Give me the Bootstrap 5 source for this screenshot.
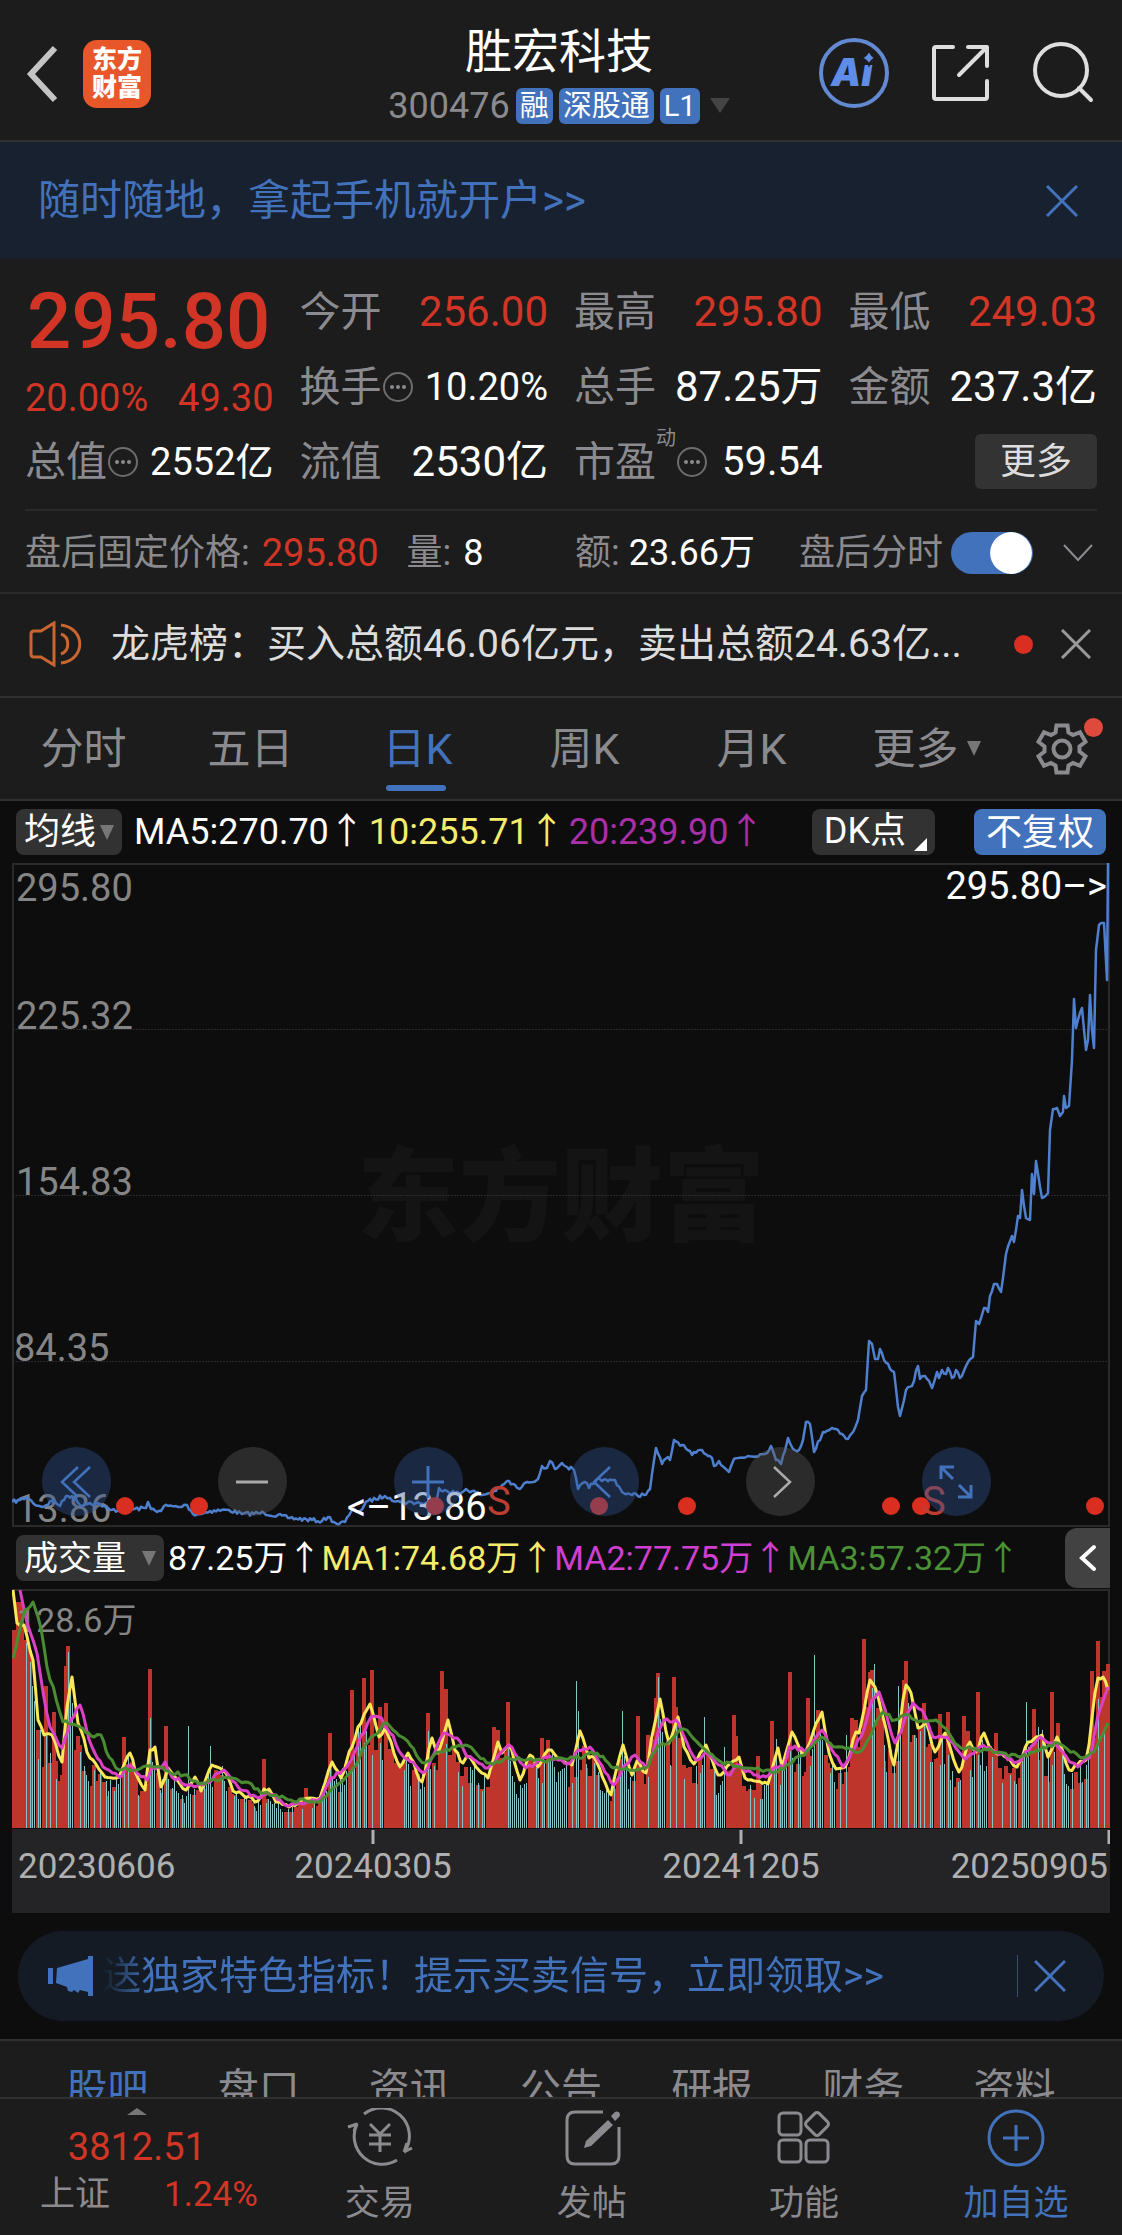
<!DOCTYPE html>
<html lang="zh-CN" data-bs-theme="dark">
<head>
<meta charset="utf-8">
<meta name="viewport" content="width=device-width, initial-scale=1">
<title>胜宏科技 300476</title>
<link rel="stylesheet" href="https://cdn.jsdelivr.net/npm/bootstrap@5.3.0/dist/css/bootstrap.min.css">
<style>
:root{--panel:#1c1c1c;--ink:#0d0d0d;--blue:#4272bb;--up:#d23525;--dim:#8b8b8f;--line:#303030}
body{background:var(--ink);color:#fff;font-family:Roboto,"Noto Sans CJK SC",sans-serif;font-size:36px;line-height:48px}
button{background:none;border:0;padding:0;color:inherit;line-height:inherit}
svg{display:block}
svg text{font-family:Roboto,"Noto Sans CJK SC",sans-serif}
.panel{background:var(--panel)}
.rule-b{border-bottom:2px solid var(--line)}
.dim{color:var(--dim)}.up{color:var(--up)}.blue{color:var(--blue)}
.topbar{height:142px}
.side{flex:1 1 0}
.actions{gap:40px;padding:6px 28px 0 0}
.heading{padding-top:11px}
.codes{gap:6px}
.logo{width:68px;height:68px;border-radius:14px;background:#e8572a;font-size:25px;line-height:28px;font-weight:900;color:#fff}
.stock{font-size:47px;line-height:60px}
.chip{background:var(--blue);border-radius:6px;font-size:29px;line-height:36px;padding:0 4px}
.tri{width:0;height:0;border:10px solid transparent;border-bottom:0;border-top:15px solid #444}
.tri-sm{border-width:15px 7px 0;border-top-color:#777}
.ad{background:#182130;color:var(--blue);font-size:42px;height:117px;padding:0 44px 0 38px}
.quotes{display:grid;grid-template-columns:repeat(4,1fr);grid-auto-rows:75px;column-gap:26px;padding:15px 25px 10px}
.quotes>.cell{display:flex;align-items:center;justify-content:space-between;white-space:nowrap}
.cell>.key{font-size:41px;color:var(--dim);display:flex;align-items:center}
.key>sup{font-size:20px;top:0}
.f42{font-size:42px}.f40{font-size:40px}.f38{font-size:38px}.f34{font-size:34px}
.price{grid-row:span 2;padding-top:12px}
.price>.big{font-size:78px;line-height:72px;font-weight:500;padding-left:2px}
.more{background:#333;border-radius:6px;font-size:36px;color:#ddd;width:122px;height:55px}
.after{display:grid;grid-template-columns:550fr 224fr 298fr;margin:0 25px;padding:18px 0 15px;border-top:2px solid #2a2a2a;white-space:nowrap}
.after .form-check-input{width:82px;height:42px;margin:0;border:0;background-color:var(--blue);background-position:right 0 center;background-size:44px 44px;background-image:url("data:image/svg+xml,%3csvg xmlns='http://www.w3.org/2000/svg' viewBox='-4 -4 8 8'%3e%3ccircle r='3.8' fill='%23fff'/%3e%3c/svg%3e")}
.news{height:104px;padding:0 31px 2px 29px;font-size:39px;color:#ddd;border-top:2px solid #2a2a2a}
.dot{width:19px;height:19px;border-radius:50%;background:#d92e20}
.period{height:105px;color:var(--dim);font-size:43px;border-top:2px solid var(--line)}
.period>.tab{flex:0 0 167px;height:100%;position:relative;text-align:center;text-decoration:none;color:inherit;display:flex;align-items:center;justify-content:center;gap:8px}
.period>.tab.on{color:var(--blue)}
.period>.tab.on::after{content:"";position:absolute;left:50%;bottom:8px;width:60px;height:6px;margin-left:-32px;border-radius:3px;background:var(--blue)}
.geardot{position:absolute;right:19px;top:20px;background:#e04a3c}
.bar{height:62px;padding:0 16px;white-space:nowrap}
.pick{background:#323232;border-radius:8px;height:46px}
.adjust{background:var(--blue);padding:0 12px;margin:0 0 0 39px}
.plot{margin:0 12px;position:relative}
.plot>svg,.axis>svg{width:100%;height:auto}
.tools{position:absolute;left:2%;right:1%;bottom:11px;display:flex;gap:107px;padding-left:8px}
.tools>button{width:69px;height:69px;border-radius:50%;background:rgba(90,90,90,.4);color:#aaa;display:grid;place-items:center}
.tools>.bl{background:rgba(48,84,144,.4);color:var(--blue)}
.axis{margin:0 12px;background:#242426}
.fold{background:#424242;border-radius:12px 0 0 12px;width:45px;height:60px;margin-right:-4px}
.promo{margin:18px;height:90px;border-radius:45px;background:#141b24;color:var(--blue);font-size:39px;padding:0 38px 0 30px}
.promo .txt{mask-image:linear-gradient(90deg,transparent,#000 46px);-webkit-mask-image:linear-gradient(90deg,transparent,#000 46px);white-space:nowrap;overflow:hidden}
.promo .vr{opacity:.6}
.subtabs{border-top:2px solid var(--line);padding:24px 32px 20px;font-size:41px}
.subtabs a{flex:1;text-align:center;text-decoration:none;color:var(--dim)}
.subtabs a.on{color:var(--blue)}
.dock{background:var(--panel);border-top:2px solid var(--line);height:138px;font-size:35px}
.dock>a{flex:1 1 0;text-decoration:none;color:var(--dim);display:flex;flex-direction:column;align-items:center;padding-top:9px}
.dock>a.on{color:var(--blue)}
.dock>a span{line-height:48px;margin-top:12px}
.dock>.index{flex:0 0 24.4%;padding-top:9px}
.index>.caret{width:0;height:0;border:10px solid transparent;border-top:0;border-bottom:7px solid #777}
.index>.pair{gap:54px;padding-left:40px}
</style>
<script src="https://cdn.jsdelivr.net/npm/bootstrap@5.3.0/dist/js/bootstrap.bundle.min.js"></script>
</head>
<body>
<header class="topbar panel rule-b d-flex align-items-center">
  <div class="side d-flex align-items-center ps-4 pt-2">
    <button aria-label="返回"><svg width="59" height="60" viewBox="0 0 59 60" fill="none" stroke="#c4c4c4" stroke-width="6"><path d="M31 4 7 30l24 26"/></svg></button>
    <div class="logo d-flex flex-column align-items-center justify-content-center"><span>东方</span><span>财富</span></div>
  </div>
  <div class="heading text-center">
    <h1 class="stock fw-normal m-0">胜宏科技</h1>
    <div class="codes d-flex align-items-center justify-content-center">
      <span class="dim">300476</span><span class="chip">融</span><span class="chip">深股通</span><span class="chip">L1</span><span class="tri ms-1"></span>
    </div>
  </div>
  <div class="side actions d-flex align-items-center justify-content-end">
    <button aria-label="Ai"><svg width="72" height="72" viewBox="0 0 72 72"><circle cx="36" cy="36" r="33" fill="none" stroke="#6389d2" stroke-width="4"/><text x="13" y="49" font-size="38" font-style="italic" style="font-family:Inter,sans-serif;font-weight:900" fill="#5f8ce6">Ai</text><path fill="#5f8ce6" stroke="#1c1c1c" stroke-width="2" d="M51 13q2 6 7 8-5 2-7 7-2-5-8-7 6-2 8-8z"/></svg></button>
    <button aria-label="分享"><svg width="60" height="60" viewBox="0 0 60 60" fill="none" stroke="#dedede" stroke-width="4" stroke-linecap="round" stroke-linejoin="round"><path d="M23 4H6a2 2 0 0 0-2 2v48a2 2 0 0 0 2 2h49a2 2 0 0 0 2-2V38M38 4h19v19M57 4 29 32"/></svg></button>
    <button aria-label="搜索"><svg width="64" height="64" viewBox="0 0 64 64" fill="none" stroke="#dedede" stroke-width="4" stroke-linecap="round"><circle cx="31" cy="29" r="26"/><path d="m49 47 12 12"/></svg></button>
  </div>
</header>

<div class="ad d-flex align-items-center justify-content-between">
  <span>随时随地，拿起手机就开户&gt;&gt;</span>
  <button aria-label="关闭"><svg width="32" height="32" viewBox="0 0 32 32" stroke="currentColor" stroke-width="3"><path d="m1 1 30 30M31 1 1 31"/></svg></button>
</div>

<main>
<section class="panel">
  <div class="quotes">
    <div class="price up"><div class="big">295.80</div><div class="d-flex justify-content-between f38 pt-3"><span>20.00%</span><span>49.30</span></div></div>
    <div class="cell"><span class="key">今开</span><span class="f42 up">256.00</span></div>
    <div class="cell"><span class="key">最高</span><span class="f42 up">295.80</span></div>
    <div class="cell"><span class="key">最低</span><span class="f42 up">249.03</span></div>
    <div class="cell"><span class="key">换手<svg width="32" height="32" viewBox="0 0 32 32"><use href="#more-i"/></svg></span><span class="f38">10.20%</span></div>
    <div class="cell"><span class="key">总手</span><span class="f42">87.25万</span></div>
    <div class="cell"><span class="key">金额</span><span class="f42">237.3亿</span></div>
    <div class="cell"><span class="key">总值<svg width="32" height="32" viewBox="0 0 32 32"><use href="#more-i"/></svg></span><span class="f38">2552亿</span></div>
    <div class="cell"><span class="key">流值</span><span class="f42">2530亿</span></div>
    <div class="cell"><span class="key">市盈<sup class="align-self-start">动</sup><svg width="32" height="32" viewBox="0 0 32 32"><use href="#more-i"/></svg></span><span class="f40">59.54</span></div>
    <div class="cell justify-content-end"><button class="more">更多</button></div>
  </div>
  <div class="after dim">
    <div class="d-flex"><span>盘后固定价格:</span><span class="up f38 ms-2 ps-1 me-4">295.80</span><span class="ps-1">量:</span><span class="text-white ms-2 ps-1">8</span></div>
    <div>额: <span class="text-white">23.66万</span></div>
    <div class="d-flex align-items-center form-switch p-0"><label for="ah" class="me-2">盘后分时</label><input class="form-check-input" type="checkbox" role="switch" id="ah" checked><button class="ms-auto me-1" aria-label="展开"><svg width="30" height="20" viewBox="0 0 30 20" fill="none" stroke="#8b8b8f" stroke-width="2"><path d="m1 2 14 15L29 2"/></svg></button></div>
  </div>
</section>

<section class="news panel d-flex align-items-center">
  <svg width="54" height="46" viewBox="0 0 54 46" fill="none" stroke="#c9662f" stroke-width="3"><path d="M2 13q0-3 3-3h7L25 2v42L12 36H5q-3 0-3-3zM32 13c9 3 9 17 0 20M32 4c25 3 25 35 0 38"/></svg>
  <span class="flex-fill ps-4 ms-1 text-nowrap">龙虎榜：买入总额46.06亿元，卖出总额24.63亿...</span>
  <i class="dot me-4"></i>
  <button class="ms-1" aria-label="关闭"><svg width="30" height="30" viewBox="0 0 30 30" stroke="#9a9a9a" stroke-width="3"><path d="m1 1 28 28M29 1 1 29"/></svg></button>
</section>

<nav class="period panel d-flex align-items-center rule-b position-relative">
  <a class="tab" href="#">分时</a><a class="tab" href="#">五日</a><a class="tab on" href="#">日K</a><a class="tab" href="#">周K</a><a class="tab" href="#">月K</a><a class="tab ps-3" href="#">更多<span class="tri tri-sm"></span></a>
  <button class="flex-fill d-flex justify-content-center" aria-label="设置"><svg width="54" height="54" viewBox="-27 -27 54 54" fill="none" stroke="#8b8b8f" stroke-width="4"><path d="M-5.500-23.500h11L6.500-16.500 11-13.900 18-16.800 23.500-7.200 17.500-2.600V2.600L23.500 7.200 18 16.800 11 13.900 6.500 16.500 5.500 23.500h-11L-6.500 16.500-11 13.900-18 16.800-23.500 7.200-17.500 2.600V-2.600L-23.500-7.200-18-16.800-11-13.900-6.500-16.500z"/><circle r="8.500"/></svg></button>
  <i class="dot geardot"></i>
</nav>

<section>
  <div class="bar d-flex align-items-center">
    <button class="pick d-flex align-items-center px-2 me-2"><span>均线</span><span class="tri tri-sm ms-1"></span></button>
    <span class="ms-1 me-1">MA5:270.70↑</span><span class="me-1" style="color:#f6ec6c">10:255.71↑</span><span style="color:#a92fa9">20:239.90↑</span>
    <button class="pick d-flex align-items-end ms-auto ps-2 pe-2"><span class="ps-1">DK点</span><svg class="ms-2 mb-1" width="13" height="13"><path fill="#fff" d="M13 0v13H0z"/></svg></button>
    <button class="pick adjust">不复权</button>
  </div>
  <div class="plot">
    <svg id="price" viewBox="12 863 1098 664">
      <defs><g id="more-i"><circle cx="16" cy="16" r="14" fill="none" stroke="#6d6d70" stroke-width="2"/><g fill="#8b8b8f"><circle cx="10" cy="16" r="2"/><circle cx="16" cy="16" r="2"/><circle cx="22" cy="16" r="2"/></g></g></defs>
      <text x="561" y="1233" text-anchor="middle" font-size="102" style="font-weight:900" fill="#141414">东方财富</text>
      <g stroke="#2a2a2a" stroke-width="2" fill="none"><path d="M13 864H1109V1526H13z"/><path stroke-width="1" stroke-dasharray="2 1" d="M13 1029.500H1109M13 1195.500H1109M13 1361.500H1109"/></g>
      <g fill="#858585" font-size="38"><text x="16" y="901">295.80</text><text x="16" y="1029">225.32</text><text x="16" y="1195">154.83</text><text x="14" y="1361">84.35</text><text x="16" y="1522">13.86</text></g>
      <path id="pline" fill="none" stroke="#4f80cf" stroke-width="2.500" stroke-linejoin="round"/>
      <g fill="#fff" font-size="38"><text x="1107" y="899" text-anchor="end">295.80–&gt;</text><text x="347" y="1520">&lt;–13.86</text></g>
      <g fill="#d92e20" id="pins"></g>
      <g fill="#bd3d33" font-size="40"><text x="487" y="1515">S</text><text x="922" y="1515">S</text></g>
    </svg>
    <div class="tools">
      <button class="bl" aria-label="最早"><svg width="36" height="36" fill="none" stroke="currentColor" stroke-width="2.500"><path d="M20 3 4 18l16 15M32 3 16 18l16 15"/></svg></button>
      <button aria-label="缩小"><svg width="36" height="36" stroke="currentColor" stroke-width="3"><path d="M2 18h32"/></svg></button>
      <button class="bl" aria-label="放大"><svg width="36" height="36" stroke="currentColor" stroke-width="3"><path d="M2 18h32M18 2v32"/></svg></button>
      <button class="bl" aria-label="左移"><svg width="36" height="36" fill="none" stroke="currentColor" stroke-width="2.500"><path d="M24 3 8 18l16 15"/></svg></button>
      <button aria-label="右移"><svg width="36" height="36" fill="none" stroke="currentColor" stroke-width="2.500"><path d="m12 3 16 15-16 15"/></svg></button>
      <button class="bl" aria-label="全屏"><svg width="36" height="36" fill="none" stroke="currentColor" stroke-width="3"><path d="M3 15V3h13M4 4l11 11M33 21v12H20M32 32 21 21"/></svg></button>
    </div>
  </div>
  <div class="bar f34 d-flex align-items-center">
    <button class="pick d-flex align-items-center px-2"><span>成交量</span><span class="tri tri-sm ms-3"></span></button>
    <span class="ms-1">87.25万↑</span><span style="color:#f6ec6c">MA1:74.68万↑</span><span style="color:#d03fd0">MA2:77.75万↑</span><span style="color:#4b9135">MA3:57.32万↑</span>
    <button class="fold ms-auto d-grid justify-content-center align-content-center" aria-label="收起"><svg width="20" height="28" fill="none" stroke="#fff" stroke-width="4" stroke-linecap="round"><path d="M16 3 4 14l12 11"/></svg></button>
  </div>
  <div class="plot">
    <svg viewBox="12 1589 1098 240">
      <path d="M12 1590H1109V1828" fill="none" stroke="#2a2a2a" stroke-width="2"/>
      <g id="bars"></g>
      <text x="17" y="1632" font-size="34" fill="#858585">128.6万</text>
      <g fill="none" stroke-width="3" stroke-linejoin="round"><path id="m1" stroke="#fbe75a"/><path id="m2" stroke="#dc40c4"/><path id="m3" stroke="#4b8c32"/></g>
    </svg>
  </div>
  <div class="axis"><svg viewBox="12 1829 1098 84">
    <path d="M373 1830v14M741 1830v14M1109 1830v14" stroke="#b0b0b0" stroke-width="3"/>
    <g font-size="35" fill="#b0b0b0"><text x="18" y="1878">20230606</text><text x="373" y="1878" text-anchor="middle">20240305</text><text x="741" y="1878" text-anchor="middle">20241205</text><text x="1108" y="1878" text-anchor="end">20250905</text></g>
  </svg></div>
</section>

<div class="promo d-flex align-items-center">
  <svg width="46" height="40" viewBox="0 0 46 40" fill="currentColor"><path d="M0 12h5v16H0zM9 12 40 3V0h5v40h-5v-4l-8-2-2 3-4-3-2 2-4-1-1-4-11-4z"/></svg>
  <span class="txt flex-fill ms-2">送独家特色指标！提示买卖信号，立即领取&gt;&gt;</span>
  <span class="vr me-3 my-4"></span>
  <button aria-label="关闭"><svg width="32" height="32" viewBox="0 0 32 32" stroke="currentColor" stroke-width="3"><path d="m1 1 30 30M31 1 1 31"/></svg></button>
</div>

<nav class="subtabs panel d-flex"><a class="on" href="#">股吧</a><a href="#">盘口</a><a href="#">资讯</a><a href="#">公告</a><a href="#">研报</a><a href="#">财务</a><a href="#">资料</a></nav>
</main>

<nav class="dock fixed-bottom d-flex">
  <div class="index d-flex flex-column align-items-center">
    <span class="caret"></span>
    <div class="up f38 mt-2">3812.51</div>
    <div class="pair d-flex w-100"><span class="dim">上证</span><span class="up">1.24%</span></div>
  </div>
  <a href="#"><svg width="66" height="60" viewBox="0 0 66 60" fill="none" stroke="currentColor" stroke-width="3"><path d="M17 6a28 28 0 0 1 41 37l-1-1M57 44l8-4M57 44l3-9M50 52A28 28 0 0 1 10 16M10 16 1 19M10 15l-3 8M23 16l10 10 10-10M22 27h22M22 36h22M33 26v18"/></svg><span>交易</span></a>
  <a href="#"><svg width="60" height="60" viewBox="0 0 60 60" fill="none" stroke="currentColor" stroke-width="3"><path d="M41 4H13q-8 0-8 8v36q0 8 8 8h36q8 0 8-8V19"/><path fill="currentColor" stroke="none" d="m46 12 5 5-22 21-7 2 2-7zM49 8l4-4c3-2 7 2 4 5l-4 4z"/></svg><span>发帖</span></a>
  <a href="#"><svg width="60" height="60" viewBox="0 0 60 60" fill="none" stroke="currentColor" stroke-width="3"><rect x="5" y="5" width="22" height="22" rx="4"/><rect x="5" y="32" width="22" height="22" rx="4"/><rect x="32" y="32" width="22" height="22" rx="4"/><rect x="34" y="7" width="18" height="18" rx="3" transform="rotate(45 43 16)"/></svg><span>功能</span></a>
  <a href="#" class="on"><svg width="60" height="60" viewBox="0 0 60 60" fill="none" stroke="currentColor" stroke-width="3"><circle cx="30" cy="30" r="27"/><path d="M17 30h26M30 17v26"/></svg><span>加自选</span></a>
</nav>

<script>
let seed=7;const rnd=()=>(seed=(seed*16807)%2147483647)/2147483647;
const pts=s=>s.trim().split(/\s+/).map(p=>p.split(',').map(Number));
function at(a,x){if(x<=a[0][0])return a[0][1];for(let i=1;i<a.length;i++)if(x<=a[i][0]){const[p,q]=a[i-1],[r,s]=a[i];return q+(s-q)*(x-p)/(r-p||1)}return a[a.length-1][1]}
function path(a,step,j){let d='';for(let i=0;i<a.length;i++){d+=(i?'L':'M')+a[i][0]+' '+a[i][1];const n=a[i+1];if(n)for(let x=a[i][0]+step;x<n[0]-1;x+=step)d+='L'+x+' '+(at([a[i],n],x)+(rnd()-.5)*j).toFixed(1)}return d}
// Moving averages: rounded turns, with a slight daily ripple
function smooth(a){
  let d='M'+a[0];
  for(let i=0;i<a.length-1;i++){
    const[x0,y0]=a[i],[x1,y1]=a[i+1];
    const n=Math.max(1,Math.round((x1-x0)/3));
    for(let k=1;k<=n;k++){const t=k/n,e=t*t*(3-2*t);d+='L'+(x0+(x1-x0)*t).toFixed(1)+' '+(y0+(y1-y0)*(.5*t+.5*e)+(k<n?(rnd()-.5)*4:0)).toFixed(1)}
  }
  return d;
}
const price=pts(`12,1502 20,1500 27,1497 33,1503 42,1507 54,1500 60,1506 66,1496 72,1496 80,1505 90,1503 100,1504 110,1510 125,1510 146,1508 148,1502 151,1509 161,1511 164,1506 180,1507 187,1505 193,1514 200,1514 210,1511 229,1510 242,1514 264,1513 290,1518 322,1521 328,1517 337,1524 345,1522 352,1510 360,1511 368,1501 385,1496 390,1498 400,1502 420,1503 436,1504 439,1488 445,1490 460,1494 466,1489 482,1495 490,1493 500,1488 507,1481 520,1489 527,1482 538,1479 542,1466 547,1468 550,1461 555,1469 562,1463 567,1467 574,1470 578,1489 585,1482 589,1488 597,1479 602,1481 615,1480 622,1492 632,1495 644,1495 650,1489 656,1448 662,1464 668,1457 670,1460 674,1440 682,1445 692,1455 702,1450 712,1458 714,1466 719,1461 729,1472 734,1459 748,1456 765,1454 771,1446 776,1460 781,1464 788,1438 793,1449 799,1450 803,1440 806,1422 810,1424 814,1452 823,1432 832,1428 838,1430 842,1434 848,1439 853,1432 858,1420 862,1396 866,1390 869,1341 872,1344 875,1359 878,1359 880,1349 884,1360 894,1372 898,1407 900,1416 906,1390 912,1386 918,1366 920,1379 925,1376 932,1388 937,1372 939,1378 942,1370 946,1374 948,1368 952,1378 954,1377 956,1370 960,1378 966,1366 973,1357 976,1321 979,1324 984,1308 988,1312 990,1296 994,1284 997,1284 1001,1292 1006,1254 1012,1236 1014,1242 1018,1216 1020,1218 1022,1190 1026,1218 1030,1220 1032,1174 1034,1194 1036,1161 1042,1198 1048,1193 1050,1130 1053,1109 1057,1108 1060,1116 1063,1112 1064,1096 1066,1108 1069,1106 1072,1060 1074,999 1076,1028 1082,1008 1086,1050 1088,1040 1090,995 1092,1030 1094,1048 1096,950 1099,925 1104,923 1107,980 1108,863`);
document.getElementById('pline').setAttribute('d',path(price,2,4));
document.getElementById('pins').innerHTML=[125,199,435,599,687,891,921,1095].map(x=>`<circle cx="${x}" cy="1506" r="9"/>`).join('');
const m1=pts(`13,1590 17,1623 24,1625 33,1660 38,1720 44,1735 52,1735 62,1762 67,1707 72,1677 78,1723 90,1758 105,1777 119,1777 130,1753 138,1778 145,1790 150,1750 155,1747 161,1787 168,1768 186,1790 195,1777 201,1791 212,1765 226,1773 233,1791 258,1801 264,1789 269,1789 276,1802 289,1807 310,1798 320,1798 325,1783 332,1762 341,1778 352,1747 358,1727 370,1704 379,1737 385,1728 400,1767 408,1753 422,1782 432,1738 438,1753 448,1720 455,1750 463,1763 467,1756 488,1778 498,1742 502,1753 509,1745 520,1780 530,1755 538,1767 548,1750 561,1759 572,1765 580,1731 589,1758 594,1757 611,1795 617,1767 623,1745 632,1775 637,1761 646,1773 654,1727 660,1699 669,1743 678,1717 684,1747 694,1764 706,1745 718,1775 739,1757 745,1778 768,1784 778,1748 782,1767 792,1732 804,1755 822,1712 829,1753 836,1769 845,1767 856,1732 859,1733 870,1680 875,1687 883,1717 894,1765 906,1685 911,1693 918,1728 926,1722 935,1752 945,1733 959,1772 970,1742 976,1752 984,1733 992,1750 1008,1758 1017,1767 1028,1742 1042,1735 1048,1757 1057,1737 1069,1770 1086,1760 1098,1678 1103,1677 1108,1690`);
const m2=pts(`20,1590 27,1623 34,1643 50,1727 62,1748 71,1720 80,1705 92,1747 103,1767 119,1777 130,1765 147,1780 152,1767 161,1768 165,1762 172,1777 188,1785 203,1785 224,1770 241,1790 260,1798 268,1793 289,1806 321,1798 331,1778 346,1768 364,1733 371,1717 379,1717 390,1733 402,1755 425,1772 444,1733 457,1738 467,1757 488,1768 509,1745 526,1768 547,1757 570,1763 578,1750 590,1747 614,1785 625,1765 635,1755 646,1768 664,1720 676,1720 696,1760 707,1753 730,1775 737,1765 754,1775 766,1777 775,1767 784,1767 789,1747 807,1750 822,1730 832,1750 843,1767 861,1737 872,1700 879,1692 895,1743 913,1703 922,1710 933,1737 947,1737 965,1759 983,1745 1017,1762 1040,1737 1051,1743 1078,1767 1089,1758 1101,1707 1108,1687`);
const m3=pts(`13,1658 25,1610 33,1602 38,1617 50,1680 63,1722 80,1727 94,1737 101,1735 109,1757 119,1770 153,1767 184,1775 199,1784 230,1778 245,1782 264,1793 291,1800 320,1802 333,1788 350,1773 371,1737 387,1723 402,1737 425,1763 440,1752 465,1745 490,1763 509,1758 543,1761 574,1758 597,1753 614,1768 632,1770 646,1768 657,1747 668,1743 684,1729 703,1748 721,1762 746,1768 775,1772 804,1755 822,1737 836,1747 861,1751 883,1712 895,1720 904,1715 918,1722 936,1720 961,1748 987,1750 1021,1757 1058,1743 1083,1758 1094,1752 1108,1723`);
const red=new Map(pts(`12,1630 14,1630 16,1602 18,1602 20,1602 22,1664 24,1640 28,1650 44,1686 52,1712 64,1666 66,1646 122,1737 148,1669 164,1726 262,1759 304,1788 328,1733 350,1690 362,1678 370,1670 378,1707 384,1703 426,1713 440,1671 444,1689 492,1727 496,1730 506,1702 540,1738 546,1740 636,1716 646,1735 654,1698 656,1673 672,1677 674,1707 732,1715 734,1736 756,1756 770,1721 788,1672 806,1698 816,1710 850,1718 854,1720 862,1639 868,1672 870,1670 902,1680 904,1661 922,1703 938,1714 946,1712 962,1716 966,1731 976,1692 994,1733 1032,1709 1050,1692 1056,1723 1090,1671 1096,1641 1102,1671 1106,1664`));
const teal=new Map(pts(`68,1652 72,1703 150,1718 188,1726 210,1746 222,1766 428,1731 576,1681 578,1711 622,1711 658,1677 704,1717 724,1747 776,1739 814,1655 846,1735 874,1664 898,1686 908,1703 1026,1702 1038,1727 1042,1730`));
let up=true,back='',front='';
for(let x=12;x<1108;x+=2){
  if(rnd()<(up?.4:.33))up=!up;
  if(x<26)up=true;
  let y=Math.min(1812,1828-(1828-at(m1,x+2))*(.62+rnd()*.4)),isUp=up;
  if(red.has(x)){y=red.get(x);isUp=true}
  if(teal.has(x)){y=teal.get(x);isUp=false}
  if(isUp)back+=`<path d="M${x} ${y.toFixed(0)}h4V1828h-4z"/>`;
  else front+=`<path d="M${x} ${y.toFixed(0)}h1V1828h-1z"/>`;
}
document.getElementById('bars').innerHTML=`<g fill="#bd352b">${back}</g><g fill="#86c4c6">${front}</g>`;
[['m1',m1],['m2',m2],['m3',m3]].forEach(([id,a])=>document.getElementById(id).setAttribute('d',smooth(a)));
</script>
</body>
</html>
